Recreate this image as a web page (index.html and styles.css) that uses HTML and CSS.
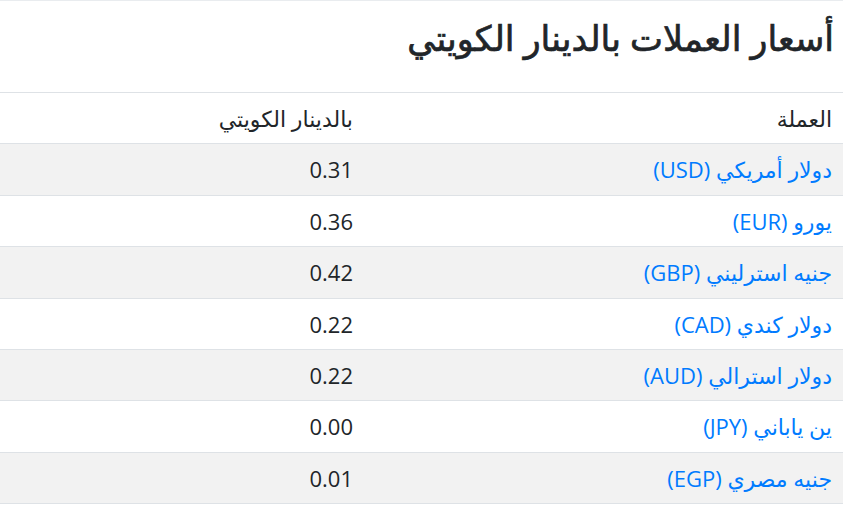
FILE: index.html
```html
<!DOCTYPE html>
<html lang="ar" dir="rtl">
<head>
<meta charset="utf-8">
<title>أسعار العملات بالدينار الكويتي</title>
<link rel="stylesheet" href="styles.css">
</head>
<body>
<div class="page">
  <h3 class="title">أسعار العملات بالدينار الكويتي</h3>
  <table class="rates">
    <thead>
      <tr><th class="c-name">العملة</th><th class="c-val">بالدينار الكويتي</th></tr>
    </thead>
    <tbody>
      <tr><td class="c-name"><a href="#">دولار أمريكي (USD)</a></td><td class="c-val">0.31</td></tr>
      <tr><td class="c-name"><a href="#">يورو (EUR)</a></td><td class="c-val">0.36</td></tr>
      <tr><td class="c-name"><a href="#">جنيه استرليني (GBP)</a></td><td class="c-val">0.42</td></tr>
      <tr><td class="c-name"><a href="#">دولار كندي (CAD)</a></td><td class="c-val">0.22</td></tr>
      <tr><td class="c-name"><a href="#">دولار استرالي (AUD)</a></td><td class="c-val">0.22</td></tr>
      <tr><td class="c-name"><a href="#">ين ياباني (JPY)</a></td><td class="c-val">0.00</td></tr>
      <tr><td class="c-name"><a href="#">جنيه مصري (EGP)</a></td><td class="c-val">0.01</td></tr>
    </tbody>
  </table>
</div>
</body>
</html>
```
FILE: styles.css
```css
html, body {
  margin: 0;
  padding: 0;
  background: #fff;
}
body {
  font-family: "Open Sans", "DejaVu Sans", sans-serif;
  color: #212529;
  font-size: 22px;
  padding-right: 4px;
}
.page {
  width: 843px;
  margin-left: auto;
  margin-right: 0;
  border-top: 1px solid #e9ecef;
  box-sizing: border-box;
}
.title {
  margin: 0;
  padding: 20px 9px 37px 0;
  font-size: 35px;
  line-height: 34px;
  font-weight: 500;
  text-align: right;
  color: #212529;
  -webkit-text-stroke: 0.7px #212529;
}
.rates {
  width: 100%;
  border-collapse: collapse;
}
.rates th,
.rates td {
  padding: 12px 11px 12px 12px;
  line-height: 26.4px;
  border-top: 1px solid #dee2e6;
  text-align: right;
  font-weight: 400;
  vertical-align: top;
}
.rates .c-name { width: 456px; }
.rates tbody tr:nth-child(odd) { background: #f2f2f2; }
.rates tbody tr:last-child td { border-bottom: 1px solid #dee2e6; }
.rates a {
  color: #007bff;
  text-decoration: none;
}
```
